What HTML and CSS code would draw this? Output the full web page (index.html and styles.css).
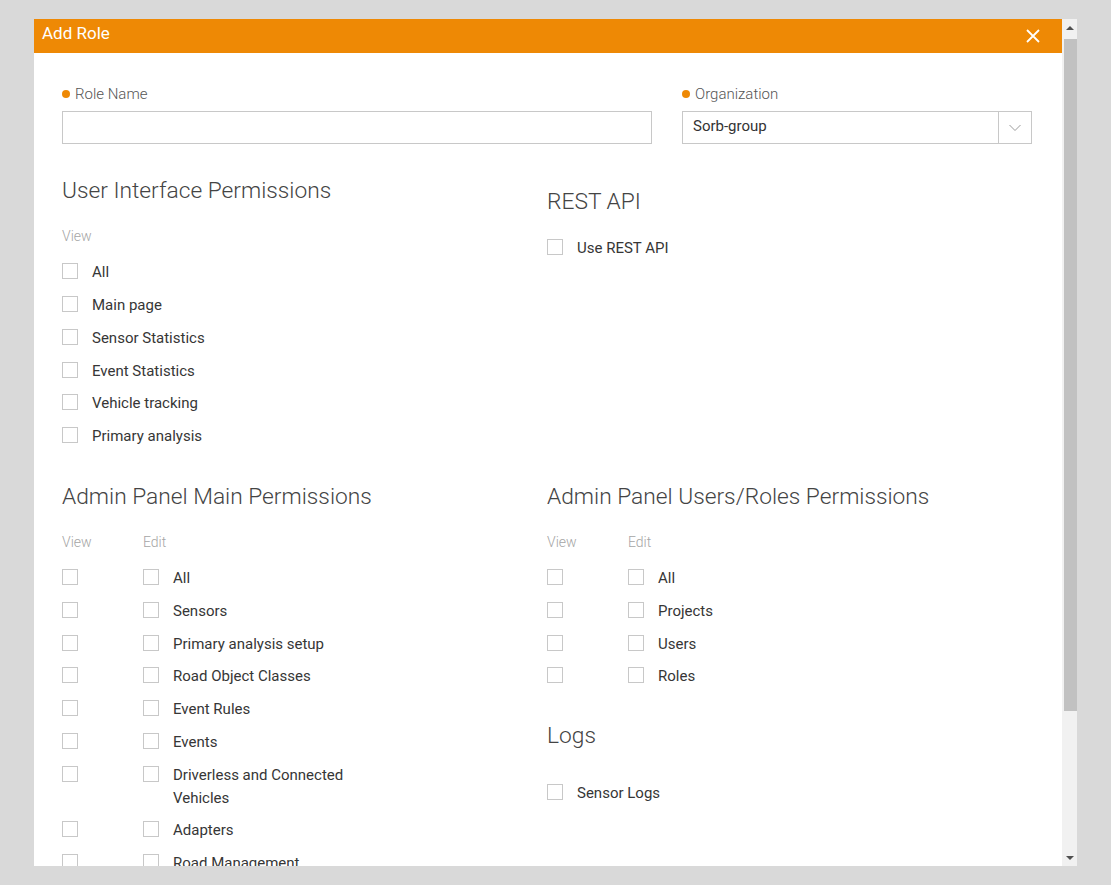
FILE: index.html
```html
<!DOCTYPE html>
<html lang="en">
<head>
<meta charset="utf-8">
<title>Add Role</title>
<link rel="stylesheet" href="styles.css">
</head>
<body>
<div class="screen">
  <div class="frame">
    <div class="dialog">
      <div class="dialog-header">
        <span class="dialog-title">Add Role</span>
        <button class="close" aria-label="Close">
          <svg width="14" height="14" viewBox="0 0 14 14"><path d="M1 1L13 13M13 1L1 13" stroke="#fff" stroke-width="1.8" fill="none"/></svg>
        </button>
      </div>
      <div class="dialog-body">
        <div class="fields">
          <div class="field field-name">
            <div class="field-label"><span class="req"></span>Role Name</div>
            <div class="input"></div>
          </div>
          <div class="field field-org">
            <div class="field-label"><span class="req"></span>Organization</div>
            <div class="select">
              <span class="select-value">Sorb-group</span>
              <span class="select-arrow">
                <svg width="12" height="8" viewBox="0 0 12 8"><path d="M0.5 1L6 6.5L11.5 1" stroke="#9a9a9a" stroke-width="1" fill="none"/></svg>
              </span>
            </div>
          </div>
        </div>

        <div class="perm-grid">
          <section class="section sec-ui">
            <h2 class="sec-title">User Interface Permissions</h2>
            <div class="col-head"><span class="ch-view">View</span></div>
            <div class="row"><span class="cb"></span><span class="lbl">All</span></div>
            <div class="row"><span class="cb"></span><span class="lbl">Main page</span></div>
            <div class="row"><span class="cb"></span><span class="lbl">Sensor Statistics</span></div>
            <div class="row"><span class="cb"></span><span class="lbl">Event Statistics</span></div>
            <div class="row"><span class="cb"></span><span class="lbl">Vehicle tracking</span></div>
            <div class="row"><span class="cb"></span><span class="lbl">Primary analysis</span></div>
          </section>

          <section class="section sec-rest">
            <h2 class="sec-title">REST API</h2>
            <div class="row"><span class="cb"></span><span class="lbl">Use REST API</span></div>
          </section>

          <section class="section sec-admin">
            <h2 class="sec-title">Admin Panel Main Permissions</h2>
            <div class="col-head"><span class="ch-view">View</span><span>Edit</span></div>
            <div class="row"><span class="view-cell"><span class="cb"></span></span><span class="cb"></span><span class="lbl">All</span></div>
            <div class="row"><span class="view-cell"><span class="cb"></span></span><span class="cb"></span><span class="lbl">Sensors</span></div>
            <div class="row"><span class="view-cell"><span class="cb"></span></span><span class="cb"></span><span class="lbl">Primary analysis setup</span></div>
            <div class="row"><span class="view-cell"><span class="cb"></span></span><span class="cb"></span><span class="lbl">Road Object Classes</span></div>
            <div class="row"><span class="view-cell"><span class="cb"></span></span><span class="cb"></span><span class="lbl">Event Rules</span></div>
            <div class="row"><span class="view-cell"><span class="cb"></span></span><span class="cb"></span><span class="lbl">Events</span></div>
            <div class="row"><span class="view-cell"><span class="cb"></span></span><span class="cb"></span><span class="lbl">Driverless and Connected Vehicles</span></div>
            <div class="row"><span class="view-cell"><span class="cb"></span></span><span class="cb"></span><span class="lbl">Adapters</span></div>
            <div class="row"><span class="view-cell"><span class="cb"></span></span><span class="cb"></span><span class="lbl">Road Management</span></div>
          </section>

          <section class="section sec-users">
            <h2 class="sec-title">Admin Panel Users/Roles Permissions</h2>
            <div class="col-head"><span class="ch-view">View</span><span>Edit</span></div>
            <div class="row"><span class="view-cell"><span class="cb"></span></span><span class="cb"></span><span class="lbl">All</span></div>
            <div class="row"><span class="view-cell"><span class="cb"></span></span><span class="cb"></span><span class="lbl">Projects</span></div>
            <div class="row"><span class="view-cell"><span class="cb"></span></span><span class="cb"></span><span class="lbl">Users</span></div>
            <div class="row"><span class="view-cell"><span class="cb"></span></span><span class="cb"></span><span class="lbl">Roles</span></div>

            <h2 class="sec-title logs-title">Logs</h2>
            <div class="row"><span class="cb"></span><span class="lbl">Sensor Logs</span></div>
          </section>
        </div>
      </div>
    </div>
    <div class="scrollbar">
      <div class="sb-btn"><span class="tri-up"></span></div>
      <div class="sb-track"><div class="sb-thumb"></div></div>
      <div class="sb-btn"><span class="tri-down"></span></div>
    </div>
  </div>
</div>
</body>
</html>
```
FILE: styles.css
```css
* { box-sizing: border-box; }
html, body { margin: 0; padding: 0; }
body {
  background: #d9d9d9;
  font-family: Roboto, "Liberation Sans", sans-serif;
  color: #333;
}
.screen {
  width: 1111px;
  height: 885px;
  padding: 19px 0 0 34px;
  overflow: hidden;
}
.frame {
  display: flex;
  height: 847px;
}
.dialog {
  width: 1028px;
  background: #fff;
  display: flex;
  flex-direction: column;
  overflow: hidden;
}
.dialog-header {
  height: 34px;
  flex: none;
  background: #ee8905;
  display: flex;
  align-items: center;
  justify-content: space-between;
  padding: 0 22px 0 8px;
}
.dialog-title {
  color: #fff;
  font-size: 17px;
  font-weight: 400;
  line-height: 30px;
  margin-top: -6px;
}
.close {
  border: 0;
  background: none;
  padding: 0;
  width: 14px;
  height: 14px;
  display: flex;
}
.dialog-body {
  flex: 1;
  overflow: hidden;
  padding: 31px 30px 0 28px;
}
.fields {
  display: flex;
  gap: 30px;
}
.field-name { flex: 1; }
.field-org { width: 350px; flex: none; }
.field-label {
  font-size: 15px;
  line-height: 20px;
  color: #555;
  font-weight: 300;
  display: flex;
  align-items: center;
  margin-bottom: 7px;
}
.req {
  width: 8px;
  height: 8px;
  border-radius: 50%;
  background: #ee8905;
  margin-right: 5px;
  flex: none;
}
.input, .select {
  height: 33px;
  border: 1px solid #c8c8c8;
  background: #fff;
}
.select {
  display: flex;
  align-items: center;
}
.select-value {
  flex: 1;
  padding-left: 10px;
  padding-bottom: 3px;
  font-size: 15px;
  color: #333;
}
.select-arrow {
  width: 33px;
  height: 100%;
  border-left: 1px solid #c8c8c8;
  display: flex;
  align-items: center;
  justify-content: center;
}
.perm-grid {
  display: grid;
  grid-template-columns: 485px 485px;
  align-items: start;
}
.sec-title {
  margin: 0;
  font-size: 22.75px;
  font-weight: 300;
  line-height: 30px;
  color: #444;
}
.sec-ui { margin-top: 32px; }
.sec-rest { margin-top: 43px; }
.sec-rest .sec-title { margin-bottom: 19.6px; }
.sec-admin, .sec-users { margin-top: 23.6px; }
.logs-title { margin-top: 33.2px; margin-bottom: 30.6px; }
.col-head {
  display: flex;
  font-size: 14px;
  line-height: 20px;
  color: #a5a5a5;
  font-weight: 300;
  margin: 20px 0 15.3px;
}
.ch-view { width: 81px; }
.row {
  display: flex;
  align-items: flex-start;
  margin-bottom: 10px;
  font-size: 15px;
  line-height: 22.8px;
}
.view-cell {
  width: 81px;
  flex: none;
}
.cb {
  display: block;
  width: 16px;
  height: 16px;
  border: 1px solid #c8c8c8;
  background: #fff;
  margin-top: 2px;
  margin-right: 14px;
  flex: none;
}
.lbl {
  color: #363636;
  max-width: 200px;
}
.scrollbar {
  width: 15px;
  background: #f1f1f1;
  display: flex;
  flex-direction: column;
}
.sb-btn {
  height: 17px;
  display: flex;
  align-items: center;
  justify-content: center;
  flex: none;
}
.tri-up, .tri-down {
  width: 0;
  height: 0;
  border-left: 4px solid transparent;
  border-right: 4px solid transparent;
}
.tri-up { border-bottom: 4px solid #505050; }
.tri-down { border-top: 4px solid #505050; }
.sb-track {
  flex: 1;
  padding: 3px 0 0 2px;
}
.sb-thumb {
  height: 672px;
  background: #c1c1c1;
}
```
